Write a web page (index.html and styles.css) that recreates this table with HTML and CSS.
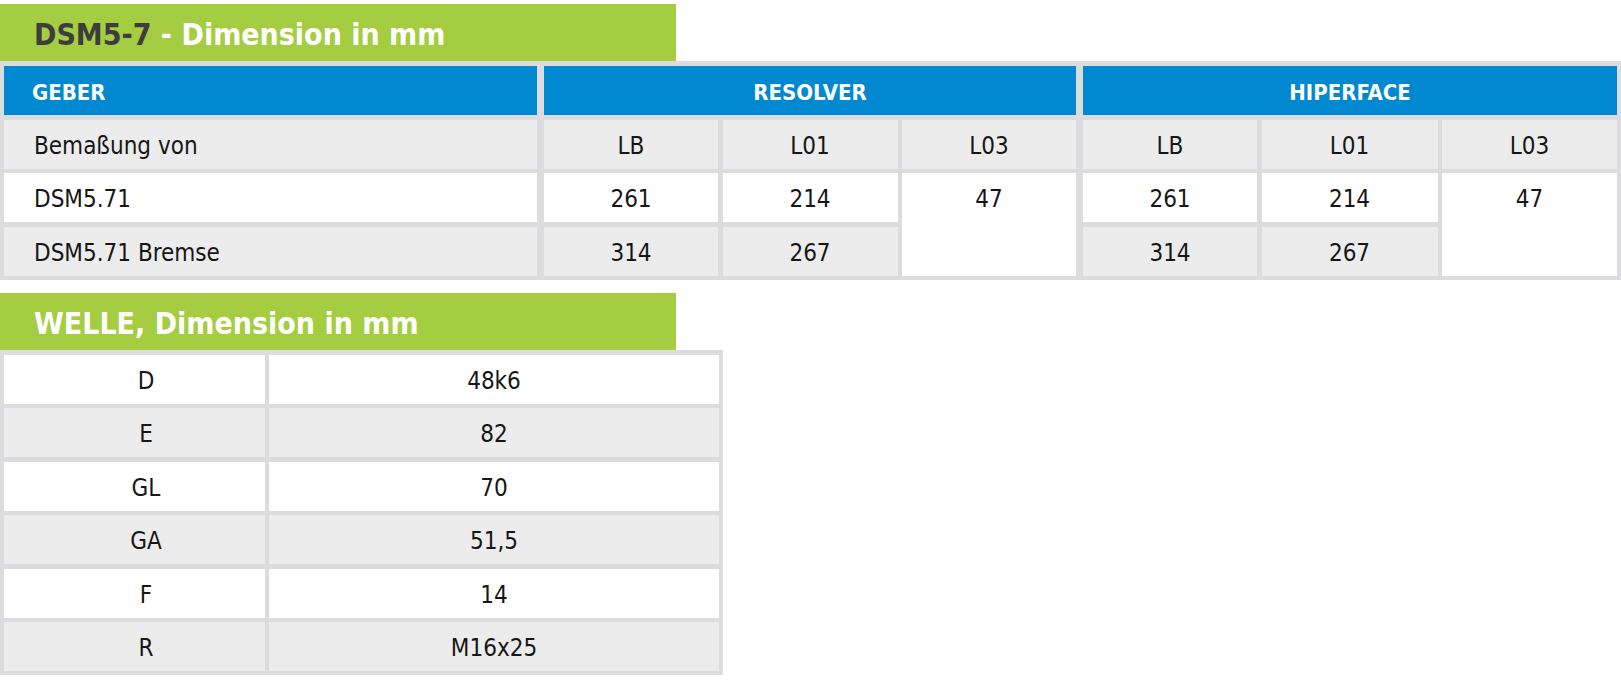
FILE: index.html
```html
<!DOCTYPE html>
<html lang="de">
<head>
<meta charset="utf-8">
<title>DSM5-7 - Dimension in mm</title>
<link rel="stylesheet" href="styles.css">
</head>
<body>
<main class="page">
  <section class="block">
    <h2 class="banner"><span class="banner-dark">DSM5-7</span> - Dimension in mm</h2>
    <div class="grid geber">
      <div class="cell head first">GEBER</div>
      <div class="cell head gs span3">RESOLVER</div>
      <div class="cell head gs span3">HIPERFACE</div>

      <div class="cell gray first">Bemaßung von</div>
      <div class="cell gray gs">LB</div>
      <div class="cell gray">L01</div>
      <div class="cell gray">L03</div>
      <div class="cell gray gs">LB</div>
      <div class="cell gray">L01</div>
      <div class="cell gray">L03</div>

      <div class="cell white first">DSM5.71</div>
      <div class="cell white gs">261</div>
      <div class="cell white">214</div>
      <div class="cell white span2r">47</div>
      <div class="cell white gs">261</div>
      <div class="cell white">214</div>
      <div class="cell white span2r">47</div>

      <div class="cell gray first">DSM5.71 Bremse</div>
      <div class="cell gray gs">314</div>
      <div class="cell gray">267</div>
      <div class="cell gray gs">314</div>
      <div class="cell gray">267</div>
    </div>
  </section>

  <section class="block block-welle">
    <h2 class="banner">WELLE, Dimension in mm</h2>
    <div class="grid welle">
      <div class="cell white key">D</div><div class="cell white">48k6</div>
      <div class="cell gray key">E</div><div class="cell gray">82</div>
      <div class="cell white key">GL</div><div class="cell white">70</div>
      <div class="cell gray key">GA</div><div class="cell gray">51,5</div>
      <div class="cell white key">F</div><div class="cell white">14</div>
      <div class="cell gray key">R</div><div class="cell gray">M16x25</div>
    </div>
  </section>
</main>
</body>
</html>
```

FILE: styles.css
```css
* {
  box-sizing: border-box;
}

html,
body {
  margin: 0;
  padding: 0;
  background: #ffffff;
}

body {
  font-family: "DejaVu Sans Condensed", "DejaVu Sans", sans-serif;
  font-stretch: condensed;
  color: #161616;
}

.page {
  padding-top: 4px;
  width: 1621px;
}

.block-welle {
  margin-top: 13px;
  width: 723px;
}

.banner {
  margin: 0;
  width: 676px;
  height: 57px;
  padding: 4px 0 0 34px;
  line-height: 53px;
  font-size: 30px;
  font-weight: bold;
  color: #ffffff;
  background: #a4cd41;
  white-space: nowrap;
}

.banner-dark {
  color: #3d3d3d;
}

.grid {
  display: grid;
  background: #dcdcde;
  grid-auto-rows: 49px;
  row-gap: 4.5px;
  padding: 5px 4px 4px 4px;
}

.geber {
  grid-template-columns: 533px 176.5px 175px 174px 176.5px 176px 1fr;
  column-gap: 4.5px;
}

.welle {
  grid-template-columns: 261px 1fr;
  column-gap: 4px;
}

.cell {
  font-size: 24px;
  padding-top: 4px;
  line-height: 45px;
  text-align: center;
  white-space: nowrap;
}

.cell.first {
  text-align: left;
  padding-left: 30px;
}

.cell.key {
  padding-left: 23px;
}

.cell.gs {
  margin-left: 2.5px;
}

.head {
  background: #0089d0;
  color: #ffffff;
  font-size: 22px;
  font-weight: bold;
}

.head.first {
  padding-left: 28px;
}

.span3 {
  grid-column: span 3;
}

.span2r {
  grid-row: span 2;
}

.gray {
  background: #ececec;
}

.white {
  background: #ffffff;
}
```
